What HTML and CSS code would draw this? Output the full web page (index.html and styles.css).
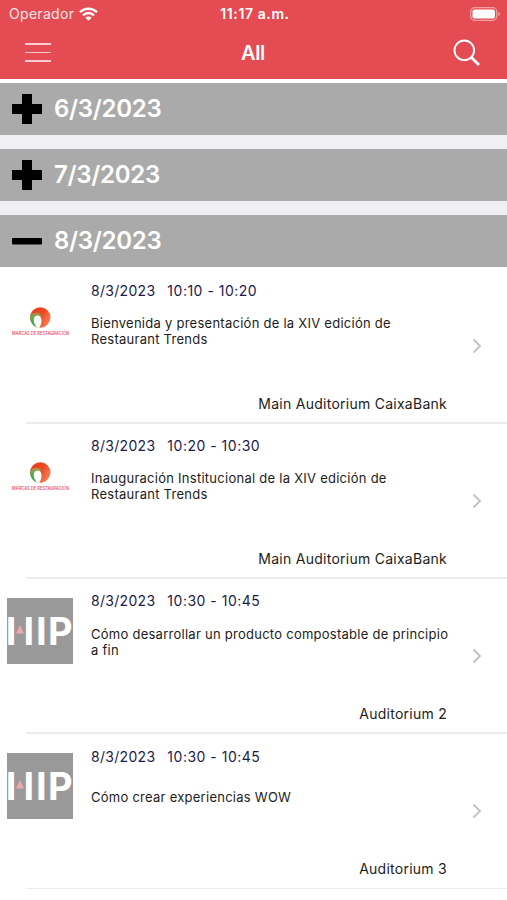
FILE: index.html
```html
<!DOCTYPE html>
<html lang="es">
<head>
    <meta charset="UTF-8">
    <meta name="viewport" content="width=device-width, initial-scale=1.0">
    <title>All</title>
    <link rel="stylesheet" href="styles.css">
</head>
<body>
    <!-- shared icons -->
    <svg class="defs" width="0" height="0">
        <defs>
            <linearGradient id="swirl" x1="0" y1="0.2" x2="1" y2="0.8">
                <stop offset="0" stop-color="#e8391c"/>
                <stop offset="0.5" stop-color="#ee4a26"/>
                <stop offset="1" stop-color="#f98a5c"/>
            </linearGradient>
            <linearGradient id="leaf" x1="0" y1="0" x2="0" y2="1">
                <stop offset="0" stop-color="#c08a3c"/>
                <stop offset="0.35" stop-color="#5fae50"/>
                <stop offset="1" stop-color="#2f9e55"/>
            </linearGradient>
            <symbol id="plus" viewBox="0 0 30 30">
                <path d="M10 0h10v10h10v10H20v10H10V20H0V10h10z"/>
            </symbol>
            <symbol id="minus" viewBox="0 0 30 30">
                <rect x="0" y="12" width="30" height="6.5" rx="1"/>
            </symbol>
            <symbol id="chevron" viewBox="0 0 10 16">
                <path d="M1.5 1.5L8 8l-6.5 6.5" fill="none" stroke="#c4c4c6" stroke-width="2"/>
            </symbol>
            <symbol id="marcas" viewBox="0 0 66 66">
                <circle cx="33.3" cy="29.5" r="10.2" fill="url(#swirl)"/>
                <path d="M23.2 28c-.6 5 2.2 10.500 7.700 11.700L34 26.500c-3-2.800-8.500-2.500-10.800 1.500z" fill="url(#leaf)"/>
                <path d="M30.200 39.700c-4.500-4.500-4.700-12 .2-12.200 5.300 0 5 8 1.800 12.300z" fill="#fff"/>
                <text x="5" y="46.8" textLength="57" lengthAdjust="spacingAndGlyphs" class="marcas-text">MARCAS DE RESTAURACIÓN</text>
            </symbol>
            <symbol id="hip" viewBox="0 0 66 66">
                <rect width="66" height="66" fill="#999"/>
                <text y="46.5" class="hip-text"><tspan x="-1.3">I</tspan><tspan x="16.5">I</tspan><tspan x="29">I</tspan><tspan x="41">P</tspan></text>
                <path d="M13 27l4 8.5H9z" fill="#f2a6ac"/>
            </symbol>
        </defs>
    </svg>

    <div class="header">
        <div class="status">
            <div class="carrier">
                <span>Operador</span>
                <svg width="19" height="14" viewBox="0 0 19 14" fill="none" stroke="#fff" stroke-width="2.4">
                    <path d="M1 5.2c4.8-4.7 12.2-4.7 17 0M4 8.3c3.2-3.1 7.8-3.1 11 0"/>
                    <path d="M9.5 13.8L6.3 10.7c1.8-1.7 4.6-1.7 6.4 0z" fill="#fff" stroke="none"/>
                </svg>
            </div>
            <div class="clock">11:17 a.m.</div>
            <div class="battery">
                <svg width="31" height="14" viewBox="0 0 31 14">
                    <rect x=".7" y=".7" width="26" height="12.6" rx="4" fill="none" stroke="#f3a3a7" stroke-width="1.2"/>
                    <rect x="2.5" y="2.5" width="22.5" height="9" rx="2" fill="#fff"/>
                    <path d="M28.3 4.8c2 .8 2 3.6 0 4.4z" fill="#f3a3a7"/>
                </svg>
            </div>
        </div>
        <div class="nav">
            <div class="menu"><i></i><i></i><i></i></div>
            <div class="nav-title">All</div>
            <svg class="search" width="28" height="28" viewBox="0 0 28 28" fill="none" stroke="#fff">
                <circle cx="11.3" cy="11.3" r="9.8" stroke-width="1.9"/>
                <path d="M18 18l8 8" stroke-width="2.8"/>
            </svg>
        </div>
    </div>

    <div class="days">
        <div class="day"><svg><use href="#plus"/></svg><span>6/3/2023</span></div>
        <div class="day"><svg><use href="#plus"/></svg><span>7/3/2023</span></div>
        <div class="day"><svg><use href="#minus"/></svg><span>8/3/2023</span></div>
    </div>

    <div class="sessions">
        <div class="session">
            <svg class="logo"><use href="#marcas"/></svg>
            <div class="info">
                <div class="time"><span>8/3/2023</span><span>10:10 - 10:20</span></div>
                <div class="title">Bienvenida y presentación de la XIV edición de Restaurant Trends</div>
                <div class="place">Main Auditorium CaixaBank</div>
            </div>
            <svg class="chevron"><use href="#chevron"/></svg>
        </div>
        <div class="session">
            <svg class="logo"><use href="#marcas"/></svg>
            <div class="info">
                <div class="time"><span>8/3/2023</span><span>10:20 - 10:30</span></div>
                <div class="title">Inauguración Institucional de la XIV edición de Restaurant Trends</div>
                <div class="place">Main Auditorium CaixaBank</div>
            </div>
            <svg class="chevron"><use href="#chevron"/></svg>
        </div>
        <div class="session">
            <svg class="logo"><use href="#hip"/></svg>
            <div class="info">
                <div class="time"><span>8/3/2023</span><span>10:30 - 10:45</span></div>
                <div class="title">Cómo desarrollar un producto compostable de principio a fin</div>
                <div class="place">Auditorium 2</div>
            </div>
            <svg class="chevron"><use href="#chevron"/></svg>
        </div>
        <div class="session">
            <svg class="logo"><use href="#hip"/></svg>
            <div class="info">
                <div class="time"><span>8/3/2023</span><span>10:30 - 10:45</span></div>
                <div class="title">Cómo crear experiencias WOW</div>
                <div class="place">Auditorium 3</div>
            </div>
            <svg class="chevron"><use href="#chevron"/></svg>
        </div>
    </div>
</body>
</html>
```
FILE: styles.css
```css
body {
    font-family: Inter, sans-serif;
    margin: 0;
    background-color: #fff;
    color: #1c1c1c;
    height: 900px;
    overflow: hidden;
}
.defs {
    display: block;
}
.header {
    height: 79px;
    background-color: #e54b52;
    color: #fff;
}
.status, .nav {
    display: grid;
    grid-template-columns: 1fr auto 1fr;
    align-items: center;
}
.status {
    height: 27px;
    padding: 0 6px 0 9px;
    font-size: 14px;
}
.carrier {
    display: flex;
    align-items: center;
    gap: 5px;
    color: #fde4e5;
    letter-spacing: 0.3px;
}
.clock {
    font-weight: 600;
    letter-spacing: 0.6px;
}
.battery {
    display: flex;
    justify-content: flex-end;
}
.nav {
    height: 51px;
    padding: 0 26px 0 25px;
}
.menu {
    display: flex;
    flex-direction: column;
    gap: 7px;
    width: 26px;
}
.menu i {
    height: 1.6px;
    background-color: #f9cdcf;
}
.nav-title {
    font-size: 20px;
    font-weight: 600;
    letter-spacing: -0.3px;
}
.search {
    justify-self: end;
}
.days {
    display: flex;
    flex-direction: column;
    gap: 14px;
    padding-top: 4px;
    background: linear-gradient(#fff 4px, #efeff4 4px);
}
.day {
    display: flex;
    align-items: center;
    gap: 12px;
    height: 52px;
    padding-left: 12px;
    background-color: #aaa;
    color: #fff;
    font-size: 24px;
    font-weight: 600;
    letter-spacing: -0.3px;
}
.day span {
    margin-top: -1px;
}
.day svg {
    width: 30px;
    height: 30px;
    fill: #000;
}
.sessions {
    padding-top: 1.4px;
}
.session {
    position: relative;
    display: flex;
    height: 155.2px;
    box-sizing: border-box;
    padding: 0 25px 0 7px;
}
.session::after {
    content: "";
    position: absolute;
    left: 26px;
    right: 0;
    bottom: 0;
    height: 1.5px;
    background-color: #ececec;
}
.logo {
    width: 66px;
    height: 66px;
    margin-top: 19.5px;
}
.marcas-text {
    font-size: 5px;
    font-weight: 500;
    fill: #f0406a;
}
.hip-text {
    font-size: 38px;
    font-weight: 700;
    fill: #fff;
}
.info {
    width: 360px;
    margin-left: 18px;
}
.time {
    display: flex;
    gap: 12px;
    margin-top: 12.6px;
    line-height: 20px;
    font-size: 14px;
    letter-spacing: 0.3px;
    color: #1d1a4b;
}
.time span + span {
    letter-spacing: 0.5px;
}
.title {
    display: flex;
    align-items: center;
    height: 32px;
    margin-top: 14.2px;
    line-height: 16px;
    font-size: 13px;
    letter-spacing: 0.26px;
}
.place {
    margin: 46.6px 4px 0 0;
    line-height: 20px;
    font-size: 14px;
    letter-spacing: 0.26px;
    text-align: right;
}
.chevron {
    width: 10px;
    height: 16px;
    margin: 69.5px 0 0 auto;
}
```
